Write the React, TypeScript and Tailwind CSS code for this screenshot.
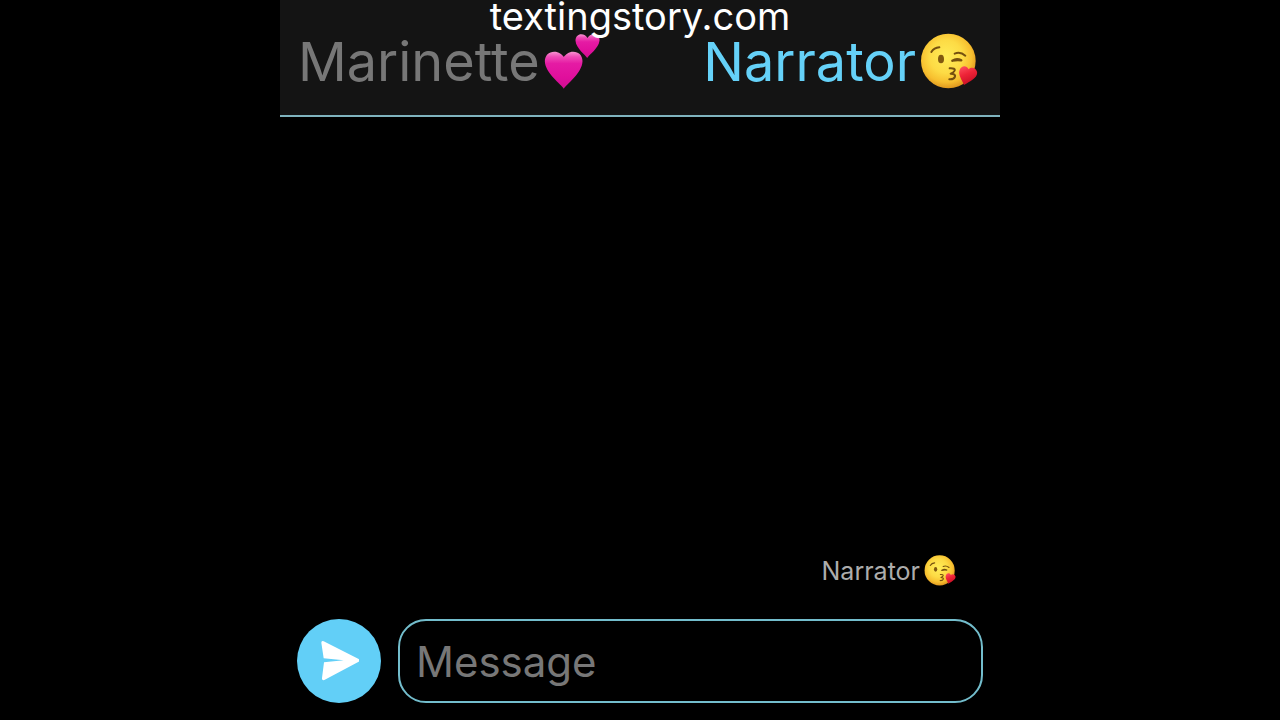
import { useState } from 'react';

const TwoHearts = ({ className }: { className: string }) => (
  <svg viewBox="24 24 171 174" className={className} role="img" aria-label="two hearts">
    <defs>
      <linearGradient id="heart-pink" x1="0" y1="0" x2="0" y2="1">
        <stop offset="0" stopColor="#f795d0" />
        <stop offset="0.14" stopColor="#ef4bb6" />
        <stop offset="0.32" stopColor="#e51ba4" />
        <stop offset="0.7" stopColor="#e00f9c" />
        <stop offset="1" stopColor="#d00e92" />
      </linearGradient>
    </defs>
    <path
      d="M82 191 C74 178 26 145 25 109 C25 91 37 80 53 80 C67 80 77 88 82 96 C87 88 97 80 110 80 C127 80 138 91 138 109 C137 145 90 178 82 191 Z"
      fill="url(#heart-pink)"
    />
    <path
      d="M152 99 C147 89 119 71 117 47 C117 35 125 28 134 28 C143 28 149 33 153 39 C157 33 163 28 172 28 C182 28 190 35 189 47 C186 71 157 89 152 99 Z"
      fill="url(#heart-pink)"
    />
  </svg>
);

const KissFace = ({ className }: { className: string }) => (
  <svg viewBox="30 22 174 174" className={className} role="img" aria-label="face blowing a kiss">
    <defs>
      <radialGradient id="face-yellow" cx="0.46" cy="0.42" r="0.6">
        <stop offset="0" stopColor="#ffec58" />
        <stop offset="0.5" stopColor="#fddb45" />
        <stop offset="0.78" stopColor="#f7bf2f" />
        <stop offset="1" stopColor="#da901c" />
      </radialGradient>
      <linearGradient id="heart-red" x1="0" y1="0" x2="0.4" y2="1">
        <stop offset="0" stopColor="#ff5563" />
        <stop offset="0.5" stopColor="#ee2337" />
        <stop offset="1" stopColor="#c90f25" />
      </linearGradient>
    </defs>
    <circle cx="115" cy="106" r="82" fill="url(#face-yellow)" />
    <g fill="none" stroke="#75500f" strokeLinecap="round" strokeLinejoin="round">
      <path d="M64 79 Q72 66 88 65" strokeWidth="6" />
      <path d="M134 84 Q151 77 166 90" strokeWidth="6" />
      <path d="M127 105 Q140 97 154 104 Q141 102 127 105" strokeWidth="7" />
      <path d="M119 128 Q137 127 134 135 Q131 141 122 144 Q138 145 135 153 Q132 162 118 161" strokeWidth="6" />
    </g>
    <ellipse cx="93" cy="100" rx="9" ry="13" fill="#80580f" />
    <path
      d="M162 178 C157 165 143 148 149 133 C154 119 170 118 176 131 C184 123 197 126 201 138 C205 155 181 166 162 178 Z"
      fill="url(#heart-red)"
    />
  </svg>
);

const SendIcon = () => (
  <svg viewBox="-4 2 120 120" className="w-10 h-10" aria-hidden="true">
    <path
      d="M3 7 Q3 0 10 3 L115 56 Q121 60 115 64 L12 119 Q4 121 5 113 L11 66 L70 60 L10 54 Z"
      fill="#ffffff"
    />
  </svg>
);

export default function App() {
  const [message, setMessage] = useState('');

  return (
    <div className="min-h-screen bg-black font-[Inter,sans-serif]">
      <main className="relative mx-auto flex min-h-screen w-full max-w-[720px] flex-col">
        <header className="border-b-2 border-[#7fb3be] bg-[#141414]">
          <p className="absolute inset-x-0 top-0 z-10 text-center text-[38px] leading-8 text-white">
            textingstory.com
          </p>
          <div className="flex items-center justify-between pl-[18px] pr-[22px] pt-7 pb-5">
            <button type="button" className="flex items-center gap-1 text-[54px] leading-[67px] text-[#777777]">
              Marinette
              <TwoHearts className="size-[58px]" />
            </button>
            <button type="button" className="flex items-center gap-1 text-[54px] leading-[67px] text-[#65d1f8]">
              Narrator
              <KissFace className="size-[58px]" />
            </button>
          </div>
        </header>

        <section className="flex flex-1 flex-col items-end justify-end px-11 pb-8">
          <p className="flex items-center gap-1 text-[25px] leading-8 text-[#acacac]">
            Narrator
            <KissFace className="size-8" />
          </p>
        </section>

        <form className="flex items-center gap-[17px] px-[17px] pb-[17px]" onSubmit={(e) => e.preventDefault()}>
          <button
            type="submit"
            aria-label="Send"
            className="flex size-[84px] shrink-0 items-center justify-center rounded-full bg-[#62cff7]"
          >
            <SendIcon />
          </button>
          <input
            type="text"
            aria-label="Message"
            placeholder="Message"
            value={message}
            onChange={(e) => setMessage(e.target.value)}
            className="h-[84px] min-w-0 flex-1 rounded-[28px] border-2 border-[#73bdcc] bg-black px-4 text-[42px] text-white outline-none placeholder:text-[#777777]"
          />
        </form>
      </main>
    </div>
  );
}
